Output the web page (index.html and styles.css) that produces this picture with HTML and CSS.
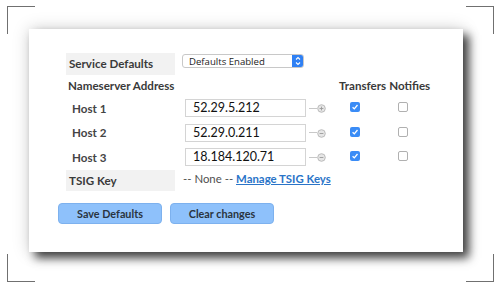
FILE: index.html
```html
<!DOCTYPE html>
<html>
<head>
<meta charset="utf-8">
<link rel="stylesheet" href="styles.css">
</head>
<body>
<div class="stage">
  <span class="mark mark-tl"></span>
  <span class="mark mark-tr"></span>
  <span class="mark mark-bl"></span>
  <span class="mark mark-br"></span>
  <div class="card">
    <div class="row row-service">
      <div class="cell-label">Service Defaults</div>
      <div class="select">
        <span class="select-text">Defaults Enabled</span>
        <span class="select-arrow">
          <svg width="12" height="14" viewBox="0 0 12 14"><path d="M4 5.5 L6 3.5 L8 5.5 M4 8.5 L6 10.5 L8 8.5" fill="none" stroke="#fff" stroke-width="1.1"/></svg>
        </span>
      </div>
    </div>
    <div class="row row-head">
      <div class="head-name">Nameserver Address</div>
      <div class="head-col">Transfers</div>
      <div class="head-col">Notifies</div>
    </div>
    <div class="hosts">
      <div class="row row-host">
        <div class="host-label">Host 1</div>
        <div class="ip">52.29.5.212</div>
        <span class="tick"></span>
        <svg class="ctl" width="9" height="9" viewBox="0 0 9 9"><circle cx="4.5" cy="4.5" r="3.8" fill="#e6e6e6" stroke="#b5b5b5" stroke-width="0.9"/><path d="M2.6 4.5 H6.4 M4.5 2.6 V6.4" stroke="#9a9a9a" stroke-width="0.9"/></svg>
        <span class="cb cb-on"><svg width="10" height="10" viewBox="0 0 10 10"><path d="M2.6 5.2 L4.3 6.9 L7.5 3" fill="none" stroke="#fff" stroke-width="1.3"/></svg></span>
        <span class="cb cb-off"></span>
      </div>
      <div class="row row-host">
        <div class="host-label">Host 2</div>
        <div class="ip">52.29.0.211</div>
        <span class="tick"></span>
        <svg class="ctl" width="9" height="9" viewBox="0 0 9 9"><circle cx="4.5" cy="4.5" r="3.8" fill="#e6e6e6" stroke="#b5b5b5" stroke-width="0.9"/><path d="M2.6 4.5 H6.4" stroke="#9a9a9a" stroke-width="0.9"/></svg>
        <span class="cb cb-on"><svg width="10" height="10" viewBox="0 0 10 10"><path d="M2.6 5.2 L4.3 6.9 L7.5 3" fill="none" stroke="#fff" stroke-width="1.3"/></svg></span>
        <span class="cb cb-off"></span>
      </div>
      <div class="row row-host">
        <div class="host-label">Host 3</div>
        <div class="ip">18.184.120.71</div>
        <span class="tick"></span>
        <svg class="ctl" width="9" height="9" viewBox="0 0 9 9"><circle cx="4.5" cy="4.5" r="3.8" fill="#e6e6e6" stroke="#b5b5b5" stroke-width="0.9"/><path d="M2.6 4.5 H6.4" stroke="#9a9a9a" stroke-width="0.9"/></svg>
        <span class="cb cb-on"><svg width="10" height="10" viewBox="0 0 10 10"><path d="M2.6 5.2 L4.3 6.9 L7.5 3" fill="none" stroke="#fff" stroke-width="1.3"/></svg></span>
        <span class="cb cb-off"></span>
      </div>
    </div>
    <div class="row row-tsig">
      <div class="cell-label cell-tsig">TSIG Key</div>
      <div class="tsig-value">-- None -- <a class="link" href="#">Manage TSIG Keys</a></div>
    </div>
    <div class="row row-buttons">
      <button class="btn">Save Defaults</button>
      <button class="btn">Clear changes</button>
    </div>
  </div>
</div>
</body>
</html>
```

FILE: styles.css
```css
html, body {
  margin: 0;
  padding: 0;
  background: #fff;
}
body {
  font-family: Lato, "Open Sans", "Liberation Sans", sans-serif;
  color: #333;
}
.stage {
  position: relative;
  width: 500px;
  height: 288px;
  padding: 29px 0 0 29px;
  box-sizing: border-box;
  overflow: hidden;
}
.mark {
  position: absolute;
  width: 27px;
  height: 27px;
  border-color: #707070;
  border-style: solid;
  border-width: 0;
}
.mark-tl { left: 7px; top: 6px; border-left-width: 1px; border-top-width: 1px; }
.mark-tr { left: 466px; top: 6px; border-right-width: 1px; border-top-width: 1px; }
.mark-bl { left: 7px; top: 254px; border-left-width: 1px; border-bottom-width: 1px; }
.mark-br { left: 466px; top: 254px; border-right-width: 1px; border-bottom-width: 1px; }

.card {
  width: 434px;
  height: 223px;
  background: #fff;
  box-sizing: border-box;
  padding: 24px 0 0 37px;
  box-shadow: 6px 6px 9px rgba(0,0,0,0.72), 0 0 16px rgba(0,0,0,0.18);
}
.row {
  display: flex;
  align-items: center;
}
.cell-label {
  width: 109px;
  height: 22px;
  line-height: 22px;
  background: #f2f2f2;
  padding-left: 3px;
  box-sizing: border-box;
  font-size: 11.6px;
  font-weight: bold;
  color: #3a3a3a;
}
.row-service {
  align-items: flex-start;
}
.select {
  margin-left: 7px;
  margin-top: 1px;
  width: 122px;
  height: 14px;
  border: 1px solid #c8c8c8;
  border-radius: 3px;
  box-sizing: border-box;
  display: flex;
  align-items: center;
  justify-content: space-between;
  overflow: hidden;
}
.select-text {
  font-size: 9.6px;
  padding-left: 6px;
  color: #222;
  font-family: "Open Sans", Lato, sans-serif;
}
.select-arrow {
  width: 12px;
  height: 14px;
  background: #2f80f4;
  display: flex;
  margin-top: -1px;
  margin-bottom: -1px;
  margin-right: -1px;
  border-radius: 0 3px 3px 0;
}
.row-head {
  margin-top: 4px;
  font-size: 11.6px;
  font-weight: bold;
  color: #3a3a3a;
  line-height: 14px;
}
.head-name {
  width: 273px;
  padding-left: 2px;
  box-sizing: border-box;
}
.head-col + .head-col {
  margin-left: 3px;
}
.hosts {
  margin-top: 6px;
  display: flex;
  flex-direction: column;
  gap: 6.5px;
}
.row-host {
  height: 18px;
}
.host-label {
  width: 109px;
  padding-left: 6px;
  box-sizing: border-box;
  font-size: 11.6px;
  font-weight: bold;
  color: #444;
}
.ip {
  margin-left: 10px;
  width: 121px;
  height: 18px;
  line-height: 16px;
  border: 1px solid #d4d4d4;
  box-sizing: border-box;
  padding-left: 7px;
  font-size: 12.5px;
  color: #111;
}
.tick {
  margin-left: 3px;
  width: 8px;
  height: 1px;
  background: #c8c8c8;
}
.ctl {
  display: block;
  margin-top: 1px;
}
.cb {
  width: 10px;
  height: 10px;
  border-radius: 2px;
  box-sizing: border-box;
  display: block;
}
.cb svg { display: block; }
.cb-on {
  margin-left: 24px;
  background: #3a8cf6;
  margin-top: -2px;
}
.cb-off {
  margin-left: 38px;
  border: 1px solid #b0b0b0;
  background: #fff;
  margin-top: -2px;
}
.row-tsig {
  margin-top: 4px;
}
.cell-tsig {
  height: 21px;
  line-height: 21px;
}
.tsig-value {
  margin-left: 8px;
  font-size: 11.4px;
  color: #505050;
  padding-bottom: 4px;
}
.link {
  color: #2a74c8;
  text-decoration: underline;
  font-weight: bold;
}
.row-buttons {
  margin-top: 12px;
  margin-left: -8px;
  gap: 8px;
}
.btn {
  width: 104px;
  height: 21px;
  border: 1px solid #7db1ee;
  border-radius: 4px;
  background: #8ec1fb;
  font-family: Lato, "Open Sans", sans-serif;
  font-size: 10.8px;
  font-weight: bold;
  color: #2a3440;
  padding: 0;
}
```
